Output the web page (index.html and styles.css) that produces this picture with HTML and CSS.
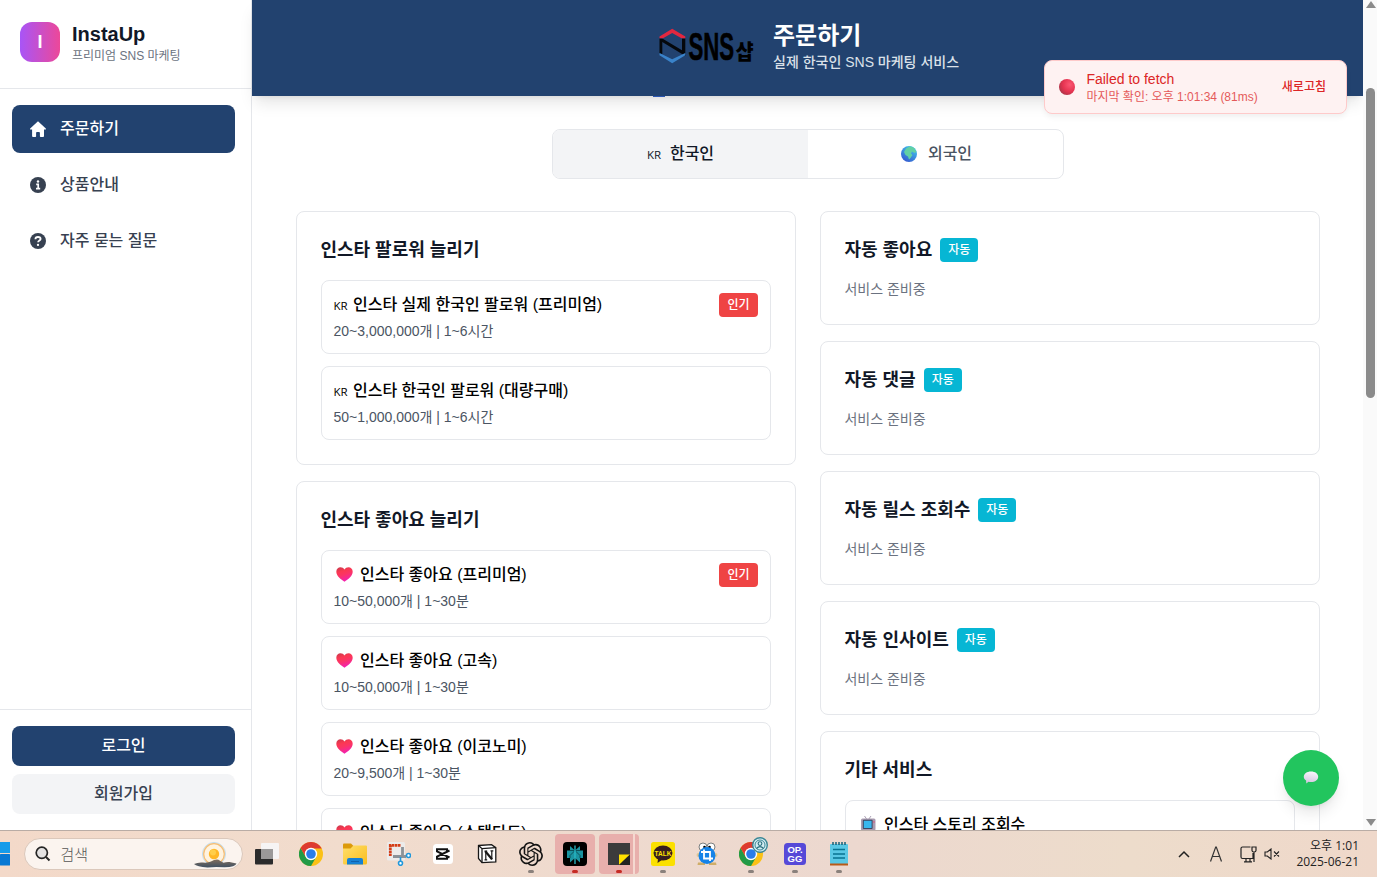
FILE: index.html
```html
<!DOCTYPE html>
<html lang="ko">
<head>
<meta charset="utf-8">
<title>InstaUp</title>
<link rel="stylesheet" href="styles.css">
</head>
<body>
<svg class="defs" width="0" height="0" aria-hidden="true">
  <defs>
    <linearGradient id="heartFill" x1="0" y1="0" x2=".35" y2="1"><stop offset="0" stop-color="#c33a4c"/><stop offset=".35" stop-color="#fb3852"/><stop offset=".6" stop-color="#fb3466"/><stop offset="1" stop-color="#f321ae"/></linearGradient>
    <linearGradient id="folderFill" x1="0" y1="0" x2="1" y2="1"><stop offset="0" stop-color="#ffdf6b"/><stop offset="1" stop-color="#f9bd1d"/></linearGradient>
    <symbol id="heart" viewBox="0 0 17 15"><path d="M8.500 14.800C5 12.300.3 9 .3 4.700.3 2 2.300.3 4.500.3c1.700 0 3 .8 4 2.200 1-1.400 2.300-2.200 4-2.200 2.200 0 4.200 1.700 4.200 4.400 0 4.300-4.700 7.600-8.200 10.100z" fill="url(#heartFill)"/></symbol>
    <symbol id="chrome" viewBox="0 0 24 24"><circle cx="12" cy="12" r="12" fill="#fbc116"/><path d="M1.600 6A12 12 0 0 0 12 24l5.200-9L12 12 6.800 15z" fill="#229a47"/><path d="M1.600 6A12 12 0 0 1 22.400 6l.3.600H12L6.800 15z" fill="#dd3b30"/><circle cx="12" cy="12" r="6.200" fill="#fff"/><circle cx="12" cy="12" r="4.800" fill="#2a7de9"/></symbol>
  </defs>
</svg>

<div class="browser">
  <aside class="sidebar">
    <div class="brand">
      <div class="brand-mark">I</div>
      <div><h1 class="brand-name">InstaUp</h1><p class="brand-sub">프리미엄 SNS 마케팅</p></div>
    </div>
    <nav class="nav">
      <a class="nav-item active"><svg width="16" height="16" viewBox="0 0 16 16"><path d="M8 0.300 15.800 7.600c.4.500.1 1-.5 1H14v6.500c0 .5-.3.900-.9.900h-2.500c-.4 0-.7-.3-.7-.7V11.800c0-.6-.4-.9-.9-.9H7c-.6 0-.9.3-.9.9v3.500c0 .4-.3.700-.7.700H3c-.6 0-.9-.4-.9-.9V8.600H.7c-.6 0-.9-.5-.5-1z" fill="#fff"/></svg><span>주문하기</span></a>
      <a class="nav-item"><svg width="16" height="16" viewBox="0 0 16 16"><circle cx="8" cy="8" r="8" fill="#374151"/><circle cx="8" cy="4.500" r="1.200" fill="#fff"/><path d="M6.200 7.400h2v4M6 11.700h4.200" stroke="#fff" stroke-width="1.700" fill="none"/></svg><span>상품안내</span></a>
      <a class="nav-item"><svg width="16" height="16" viewBox="0 0 16 16"><circle cx="8" cy="8" r="8" fill="#374151"/><path d="M5.400 6.200C5.400 4.500 6.600 4 8 4c1.600 0 2.600.8 2.600 2 0 1.600-2.500 1.500-2.500 3.300" stroke="#fff" stroke-width="1.800" fill="none"/><circle cx="8" cy="11.900" r="1.150" fill="#fff"/></svg><span>자주 묻는 질문</span></a>
    </nav>
    <div class="auth">
      <button class="btn btn-primary">로그인</button>
      <button class="btn">회원가입</button>
    </div>
  </aside>

  <main class="main">
    <header class="hero">
      <svg class="logo" width="100" height="40" viewBox="0 0 100 40">
        <path d="M1.500 11.500V26.500L4.300 27V15L27.300 29V11.500H24V23.300L4.300 11.500z" fill="#05080c"/>
        <path d="M1.500 11.300V9.500L14.200 1.700 27.300 9.500V11.300H23.500L14.200 6 5 11.300z" fill="#e3273f"/>
        <path d="M1.500 26V28.200L14.200 36.200 27.300 28.200V26L14.200 32.300z" fill="#3a83ca"/>
        <g transform="translate(30.500 32.500) scale(.585 1.030)"><text class="logo-latin">SNS</text></g>
        <g transform="translate(77.500 31.500) scale(1.040 1.100)"><text class="logo-hangul">샵</text></g>
      </svg>
      <div><h2 class="hero-title">주문하기</h2><p class="hero-sub">실제 한국인 SNS 마케팅 서비스</p></div>
      <i class="hero-dot"></i>
    </header>

    <div class="content">
      <div class="tabs">
        <div class="tab on"><span class="kr">KR</span><span>한국인</span></div>
        <div class="tab"><svg class="globe" width="16" height="16" viewBox="0 0 16 16"><defs><linearGradient id="sea" x1=".8" y1="0" x2=".2" y2="1"><stop offset="0" stop-color="#43c9ed"/><stop offset="1" stop-color="#3456cf"/></linearGradient></defs><circle cx="8" cy="8" r="8" fill="url(#sea)"/><path d="M3 6 5 2.500 9 .3l4 1.500 2.300 4-1.800 1.200L11 5.500l-1 2 1.500 1.500L9.500 12 8 13.500 7 10.500 4.500 9z" fill="#62d0a4"/></svg><span>외국인</span></div>
      </div>

      <div class="columns">
        <div class="col">
          <section class="card">
            <h3>인스타 팔로워 늘리기</h3>
            <div class="items">
              <div class="item"><div><p class="title"><span class="kr">KR</span> 인스타 실제 한국인 팔로워 (프리미엄)</p><p class="meta">20~3,000,000개 | 1~6시간</p></div><span class="pill hot">인기</span></div>
              <div class="item"><div><p class="title"><span class="kr">KR</span> 인스타 한국인 팔로워 (대량구매)</p><p class="meta">50~1,000,000개 | 1~6시간</p></div></div>
            </div>
          </section>
          <section class="card">
            <h3>인스타 좋아요 늘리기</h3>
            <div class="items">
              <div class="item"><div><p class="title"><svg class="heart"><use href="#heart"/></svg> 인스타 좋아요 (프리미엄)</p><p class="meta">10~50,000개 | 1~30분</p></div><span class="pill hot">인기</span></div>
              <div class="item"><div><p class="title"><svg class="heart"><use href="#heart"/></svg> 인스타 좋아요 (고속)</p><p class="meta">10~50,000개 | 1~30분</p></div></div>
              <div class="item"><div><p class="title"><svg class="heart"><use href="#heart"/></svg> 인스타 좋아요 (이코노미)</p><p class="meta">20~9,500개 | 1~30분</p></div></div>
              <div class="item"><div><p class="title"><svg class="heart"><use href="#heart"/></svg> 인스타 좋아요 (스탠다드)</p></div></div>
            </div>
          </section>
        </div>
        <div class="col">
          <section class="card"><h3>자동 좋아요<span class="pill auto">자동</span></h3><p class="pending">서비스 준비중</p></section>
          <section class="card"><h3>자동 댓글<span class="pill auto">자동</span></h3><p class="pending">서비스 준비중</p></section>
          <section class="card"><h3>자동 릴스 조회수<span class="pill auto">자동</span></h3><p class="pending">서비스 준비중</p></section>
          <section class="card"><h3>자동 인사이트<span class="pill auto">자동</span></h3><p class="pending">서비스 준비중</p></section>
          <section class="card">
            <h3>기타 서비스</h3>
            <div class="items">
              <div class="item"><div><p class="title"><svg class="tv" viewBox="0 0 16 16"><path d="M4.500 0 7 3.500M11 0 8.500 3.500" stroke="#aaa0b5" fill="none"/><rect x="1" y="2.500" width="14.500" height="12" rx="1.500" fill="#a99bb0"/><rect x="2.800" y="3.800" width="9.800" height="9.200" rx="1" fill="#3d4762"/><rect x="3.800" y="4.800" width="7.800" height="7.200" fill="#38b6ee"/><circle cx="14" cy="6" r=".8" fill="#e04f7c"/></svg> 인스타 스토리 조회수</p></div></div>
            </div>
          </section>
        </div>
      </div>
    </div>
  </main>

  <div class="scrollbar"><i class="arrow up"></i><i class="thumb"></i><i class="arrow down"></i></div>

  <div class="toast">
    <svg width="16" height="16" viewBox="0 0 16 16"><defs><radialGradient id="ball" cx=".68" cy=".35" r=".75"><stop offset="0" stop-color="#fb5672"/><stop offset=".6" stop-color="#e53350"/><stop offset="1" stop-color="#a93548"/></radialGradient></defs><circle cx="8" cy="8" r="8" fill="url(#ball)"/></svg>
    <div class="toast-body"><p class="toast-title">Failed to fetch</p><p class="toast-sub">마지막 확인: 오후 1:01:34 (81ms)</p></div>
    <span class="toast-action">새로고침</span>
  </div>

  <div class="fab"><svg width="16" height="14" viewBox="0 0 16 14"><defs><linearGradient id="bub" x1=".6" y1="0" x2=".4" y2="1"><stop offset="0" stop-color="#f9f5fb"/><stop offset="1" stop-color="#d3c5df"/></linearGradient></defs><path d="M8 .5c4.200 0 7.200 2.200 7.200 5.300S12.200 11.100 8 11.100q-1.500 0-2.500-.3L3.300 12.500l-.2-3C1.700 8.700.8 7.400.8 5.800.8 2.700 3.800.5 8 .5z" fill="url(#bub)"/></svg></div>
</div>

<footer class="taskbar">
  <svg class="win" width="10" height="24" viewBox="0 0 10 24"><rect width="10" height="11" fill="#169bea"/><rect y="12" width="10" height="11.500" rx=".5" fill="#0878d3"/></svg>
  <div class="search">
    <svg width="16" height="16" viewBox="0 0 16 16"><circle cx="6.800" cy="6.800" r="5.600" fill="#e4e2e2" stroke="#252525" stroke-width="1.700"/><path d="M11 11 14.500 14.500" stroke="#252525" stroke-width="2"/></svg>
    <span>검색</span>
    <svg class="weather" width="44" height="28" viewBox="0 0 44 28"><defs><linearGradient id="cloud" x1="0" y1="0" x2="0" y2="1"><stop offset="0" stop-color="#806d5c"/><stop offset="1" stop-color="#3f5164"/></linearGradient></defs><circle cx="21" cy="14" r="11.500" fill="#fff3df" stroke="#bddcf1"/><circle cx="21" cy="14" r="10.300" fill="none" stroke="#f5bd75" stroke-width="1.200"/><circle cx="21" cy="14" r="5.200" fill="#ffb726"/><circle cx="20" cy="12.500" r="3" fill="#ffce49"/><path d="M1 24q4-2 9-1.500 5 .5 8-1 4-2.500 7.500-1.800 2 1.400 5 3 3-1 6-.7l7 1.500q-1 3.500-12 3.800-9-.8-17 .1Q4 27 1 24z" fill="url(#cloud)"/></svg>
  </div>
  <div class="apps">
    <div class="app"><svg viewBox="0 0 24 24"><rect x="0" y="7" width="18" height="15.500" rx="1" fill="#2b2b2b"/><rect x="6" y="1" width="18" height="16" rx="1" fill="#f6f4f4"/><rect x="6" y="7" width="12" height="10" fill="#9b9999"/></svg></div>
    <div class="app"><svg viewBox="0 0 24 24"><use href="#chrome"/></svg></div>
    <div class="app"><svg viewBox="0 0 24 24"><path d="M0 2.500Q0 1.500 1 1.500H8L10.500 4 8 7H0z" fill="#dc9a0b"/><path d="M0 6.500H7.500L10.500 3.500H23Q24 3.500 24 4.500V21Q24 22.500 22.500 22.500H1.500Q0 22.500 0 21z" fill="url(#folderFill)"/><path d="M4 22.500V18Q4 16 6 16H18Q20 16 20 18V22.500z" fill="#1681d4"/><path d="M8 19.500h8" stroke="#0f62ad"/></svg></div>
    <div class="app"><svg viewBox="0 0 24 24"><rect x="0" y="0" width="18" height="18.500" rx="1.500" fill="#ecebea"/><path d="M13.500 3.300H3.300V14" fill="none" stroke="#d43d16" stroke-width="2.800" stroke-dasharray="2.600 .5"/><path d="M15.500 5V15.500M19 14.500H6" fill="none" stroke="#8b9298" stroke-width="2.800"/><path d="M13.500 15v4" stroke="#2098dc" stroke-width="1.600"/><circle cx="21.500" cy="13.500" r="2" fill="#fff" stroke="#2098dc" stroke-width="1.600"/><circle cx="13.500" cy="21.300" r="2" fill="#fff" stroke="#2098dc" stroke-width="1.600"/></svg></div>
    <div class="app"><svg viewBox="0 0 24 24"><rect x="2" y="2" width="20" height="20" rx="3.500" fill="#fff"/><path d="M16 9.300V7.300H6V9.300L18.500 15.500M16 14.700V16.700H6V14.700L18.500 8.500" fill="none" stroke="#111" stroke-width="2"/></svg></div>
    <div class="app"><svg viewBox="0 0 24 24"><path d="M3.500 3.500 16.500 2.700 20.800 5.700V19.800L7 20.700 3.500 16.500z" fill="#fff" stroke="#171717" stroke-width="1.300"/><path d="M3.500 3.500 7 6.700 20.800 5.700M7 6.700V20.700" fill="none" stroke="#171717" stroke-width="1.300"/><path d="M10.300 9.300 17 17.300" stroke="#171717" stroke-width="2.200"/><path d="M10.800 17.700V9.500M16.800 17.500V9M9.500 9.200h2.700M15.500 8.800h2.800M9.500 17.800H12.200" fill="none" stroke="#171717" stroke-width="1.200"/></svg></div>
    <div class="app running"><svg viewBox="0 0 24 24"><path fill="#141414" d="M22.280 9.820a5.980 5.980 0 0 0-.52-4.910 6.050 6.050 0 0 0-6.510-2.900A6.070 6.070 0 0 0 4.980 4.180a5.980 5.980 0 0 0-4 2.900 6.050 6.050 0 0 0 .74 7.100 5.980 5.980 0 0 0 .51 4.910 6.050 6.050 0 0 0 6.510 2.900A5.980 5.980 0 0 0 13.260 24a6.060 6.060 0 0 0 5.770-4.210 5.990 5.990 0 0 0 4-2.900 6.060 6.060 0 0 0-.75-7.070zm-9.020 12.610a4.480 4.480 0 0 1-2.880-1.040l.14-.08 4.780-2.760a.79.79 0 0 0 .39-.68v-6.740l2.020 1.170.04.05v5.580a4.500 4.500 0 0 1-4.490 4.500zm-9.660-4.130a4.470 4.470 0 0 1-.54-3.010l.14.090 4.780 2.760a.77.77 0 0 0 .78 0l5.840-3.370v2.330l-.03.060-4.830 2.790a4.500 4.500 0 0 1-6.140-1.650zM2.340 7.900a4.490 4.490 0 0 1 2.370-1.970v5.680a.77.77 0 0 0 .39.680l5.810 3.350-2.020 1.170h-.07l-4.830-2.790A4.500 4.500 0 0 1 2.340 7.870zm16.600 3.860-5.840-3.390L15.120 7.200h.07l4.830 2.790a4.490 4.490 0 0 1-.68 8.100v-5.680a.79.790 0 0 0-.4-.65zm2.010-3.020-.14-.09-4.770-2.780a.78.780 0 0 0-.79 0L9.410 9.230V6.900l.03-.06 4.830-2.790a4.500 4.500 0 0 1 6.680 4.660zM8.310 12.860l-2.020-1.160-.04-.06V6.070a4.500 4.500 0 0 1 7.380-3.450l-.14.08L8.700 5.460a.79.790 0 0 0-.39.680zm1.090-2.360L12 9l2.610 1.500v3L12 15l-2.600-1.500z"/></svg></div>
    <div class="app running alert"><svg viewBox="0 0 24 24"><rect width="24" height="24" rx="4" fill="#000"/><path d="M4 8.500H7V4L12 8.500 17 4V8.500H20V16H17V20.500L12 16 7 20.500V16H4z" fill="#1b93a1"/><path d="M7 16V13.500L12 8.500 17 13.500V16M7 8.500H17" fill="none" stroke="#0b4953" stroke-width=".9"/><path d="M12 3.500V22" stroke="#28bac8" stroke-width="1.300"/></svg></div>
    <div class="app running alert stacked"><svg viewBox="0 0 24 24"><path d="M1 1H23V23H1z" fill="#3b3b3b"/><path d="M12 12.500H23L12 23z" fill="#ffe100"/><path d="M23 12.500V23H12z" fill="#222"/></svg></div>
    <div class="app running"><svg viewBox="0 0 24 24"><rect width="24" height="24" rx="2.500" fill="#fbe000"/><ellipse cx="12" cy="11" rx="9.500" ry="7.500" fill="#381e1e"/><path d="M7 16.500 6.500 21l5-3.500z" fill="#381e1e"/><text class="talk" x="12" y="13.500" text-anchor="middle">TALK</text></svg></div>
    <div class="app"><svg viewBox="0 0 24 24"><circle cx="8" cy="5" r="4" fill="#fff" stroke="#7b7f80"/><circle cx="16" cy="5" r="4" fill="#fff" stroke="#7b7f80"/><circle cx="9.500" cy="5" r="1.300"/><circle cx="14.500" cy="5" r="1.300"/><path d="M3 20.500h7v2.500H2.500zM14 20.500h7l.5 2.500H14z" fill="#cfad68"/><circle cx="3.500" cy="13" r="2" fill="#e0c793"/><circle cx="20.500" cy="13" r="2" fill="#e0c793"/><circle cx="12" cy="13.500" r="8.500" fill="#1583e8"/><path d="M9 7.500V16.500H18M6 10H15V19" fill="none" stroke="#fff" stroke-width="1.800"/></svg></div>
    <div class="app running"><svg viewBox="0 0 24 24"><use href="#chrome"/></svg><svg class="profile" viewBox="0 0 16 16"><circle cx="8" cy="8" r="7.300" fill="#d4edf2" stroke="#3b8796" stroke-width="1.400"/><circle cx="8" cy="8" r="5" fill="none" stroke="#3b8796"/><circle cx="8" cy="6.600" r="1.900" fill="none" stroke="#266d7c" stroke-width="1.100"/><path d="M4.500 11.500Q8 7.800 11.500 11.500" fill="none" stroke="#266d7c" stroke-width="1.200"/></svg></div>
    <div class="app running"><svg viewBox="0 0 24 24"><rect x="1" y="1" width="22" height="22" rx="3.500" fill="#5649d8"/><text class="opgg" x="12" y="11.300" text-anchor="middle">OP.</text><text class="opgg" x="12" y="20" text-anchor="middle">GG</text></svg></div>
    <div class="app running"><svg viewBox="0 0 24 24"><rect x="3" y="2" width="18" height="20" rx="1" fill="#5ac8e5"/><path d="M3 21.500h18v2H3z" fill="#b95a18"/><path d="M6 0v3M9 0v3M12 0v3M15 0v3M18 0v3" stroke="#176078" stroke-width="1.500"/><path d="M6 7.500h12M6 12h12M6 16h12" stroke="#087391" stroke-width="1.700"/></svg></div>
  </div>
  <div class="tray">
    <svg width="12" height="8" viewBox="0 0 12 8"><path d="M1 7 6 2l5 5" fill="none" stroke="#222" stroke-width="1.500"/></svg>
    <svg width="14" height="18" viewBox="0 0 14 18"><path d="M1.500 16.500 6.700 2h.6L12.500 16.500M3.400 11.500h7.200" fill="none" stroke="#333" stroke-width="1.200"/></svg>
    <svg width="17" height="17" viewBox="0 0 17 17"><path d="M10.500 1H2.500Q1 1 1 2.500V11Q1 12.500 2.500 12.500H13V7M4 15.800h8M6 13v2.500M10 13v2.500M12 1h4v3.500q0 1.500-2 1.500t-2-1.500zM14 6v10" fill="none" stroke="#222" stroke-width="1.200"/></svg>
    <svg width="16" height="12" viewBox="0 0 16 12"><path d="M1 4h2.300L7 1v10L3.300 8H1zM10 3.500l5 5M15 3.500l-5 5" fill="none" stroke="#222" stroke-width="1.100"/></svg>
    <div class="clock"><span>오후 1:01</span><span>2025-06-21</span></div>
  </div>
</footer>
</body>
</html>
```

FILE: styles.css
```css
* { box-sizing: border-box; margin: 0; padding: 0; }
body {
  width: 1377px;
  height: 877px;
  overflow: hidden;
  font-family: "Liberation Sans", "Noto Sans CJK KR", sans-serif;
  font-size: 16px;
  line-height: 24px;
  color: #000;
  background: #fff;
}
svg { display: block; flex: none; }
.defs { position: absolute; }

.browser { position: relative; display: flex; height: 830px; overflow: hidden; }

/* Sidebar */
.sidebar { width: 252px; flex: none; display: flex; flex-direction: column; border-right: 1px solid #e5e7eb; }
.brand { height: 89px; padding: 20px; display: flex; gap: 12px; border-bottom: 1px solid #e5e7eb; }
.brand-mark {
  width: 40px; height: 40px; margin-top: 2px; border-radius: 12px;
  display: grid; place-items: center;
  color: #fff; font-weight: 700; font-size: 18px;
  background: linear-gradient(90deg, #a855f7, #ec4899);
}
.brand-name { font-size: 20px; line-height: 28px; color: #111827; }
.brand-sub { font-size: 12px; line-height: 16px; color: #6b7280; }
.nav { flex: 1; padding: 16px 16px 0 12px; display: flex; flex-direction: column; gap: 8px; }
.nav-item { height: 48px; padding: 0 18px; display: flex; align-items: center; gap: 14px; border-radius: 8px; color: #374151; font-weight: 500; }
.nav-item.active { background: #22426f; color: #fff; }
.auth { height: 121px; padding: 16px 16px 16px 12px; border-top: 1px solid #e5e7eb; display: flex; flex-direction: column; gap: 8px; }
.btn { height: 40px; border: 0; border-radius: 8px; background: #f3f4f6; color: #374151; font: 500 16px/24px "Liberation Sans", "Noto Sans CJK KR", sans-serif; }
.btn-primary { background: #22426f; color: #fff; }

/* Main area */
.main { width: 1111px; flex: none; }
.hero {
  position: relative; height: 96px; padding: 20px 0 0 405px;
  display: flex; gap: 16px; background: #22426f; color: #fff;
  box-shadow: 0 10px 15px -3px rgba(0,0,0,.1), 0 4px 6px -4px rgba(0,0,0,.1);
}
.hero-title { font-size: 24px; line-height: 32px; }
.hero-sub { font-size: 14px; line-height: 20px; font-weight: 500; color: #dbe1e9; }
.hero-dot { position: absolute; left: 401px; bottom: -1px; width: 12px; height: 1px; background: #2b57b4; }
.logo { margin-top: 7px; margin-left: 1px; margin-right: -1px; overflow: visible; }
.logo-latin { font: 700 38px "Liberation Sans", sans-serif; stroke: #000; stroke-width: .6px; }
.logo-hangul { font: 900 19px "Noto Sans CJK KR", sans-serif; }

.content { padding: 33px 43px 0 44px; }
.tabs { width: 512px; height: 50px; margin: 0 auto 32px; display: grid; grid-template-columns: 255px 255px; border: 1px solid #e5e7eb; border-radius: 8px; overflow: hidden; }
.tab { display: flex; align-items: center; justify-content: center; gap: 8px; font-weight: 500; color: #4b5563; }
.tab.on { background: #f3f4f6; color: #111827; }
.tab:last-child { padding-left: 2px; }
.globe { margin-right: 3px; margin-top: -1px; }
.kr { font: 500 11.500px/12px "Open Sans", "Noto Sans", sans-serif; display: inline-block; width: 15px; }
.tab .kr { margin-top: 2px; }

.columns { display: grid; grid-template-columns: 500px 500px; gap: 24px; }
.col { display: flex; flex-direction: column; gap: 16px; }
.card { padding: 24px; border: 1px solid #e5e7eb; border-radius: 8px; background: #fff; }
.card h3 { height: 28px; display: flex; align-items: center; gap: 8px; margin: 0 0 16px -.6px; font-size: 18px; line-height: 28px; color: #111827; }
.items { display: flex; flex-direction: column; gap: 12px; }
.item { height: 74px; padding: 12px; display: flex; justify-content: space-between; align-items: flex-start; border: 1px solid #e5e7eb; border-radius: 8px; }
.title { height: 24px; margin: 0 0 4px -.5px; font-weight: 500; white-space: nowrap; }
.meta { margin-left: -.5px; font-size: 14px; line-height: 20px; color: #4b5563; }
.pending { margin: -1px 0 1px -.6px; font-size: 14px; line-height: 20px; color: #6b7280; }
.pill { height: 24px; padding: 4px 8px; border-radius: 4px; color: #fff; font-size: 12px; line-height: 16px; font-weight: 500; }
.hot { padding: 4px 8.500px; background: #ef4444; }
.auto { background: #06b6d4; }
.heart { display: inline-block; width: 17px; height: 15px; margin: 0 3px 0 2px; vertical-align: -2px; }
.tv { display: inline-block; width: 16px; height: 16px; margin: 0 4px 0 2px; vertical-align: -2px; }

/* Page scrollbar */
.scrollbar { position: relative; width: 14px; background: #fafafa; }
.thumb { position: absolute; left: 3px; top: 88px; width: 9px; height: 310px; border-radius: 5px; background: #8b8b8b; }
.arrow { position: absolute; left: 3px; border: 5px solid transparent; }
.up { top: -4px; border-bottom: 7px solid #8b8b8b; }
.down { bottom: -1px; border-top: 7px solid #8b8b8b; }

/* Floating elements */
.toast {
  position: absolute; left: 1044px; top: 60px; width: 303px; height: 54px; padding: 0 20px 0 14.400px;
  display: flex; align-items: center;
  background: #fef2f2; border: 1px solid #fecaca; border-radius: 8px;
  box-shadow: 0 4px 6px -1px rgba(0,0,0,.06);
}
.toast svg { margin-top: -1px; }
.toast-body { flex: 1; margin: -1px 0 0 11px; color: #dc2626; }
.toast-title { font-size: 14px; line-height: 20px; }
.toast-sub { font-size: 12px; line-height: 16px; opacity: .75; }
.toast-action { font-size: 12px; font-weight: 500; color: #dc2626; line-height: 16px; }
.fab {
  position: absolute; left: 1283px; top: 750px; width: 56px; height: 56px; border-radius: 50%;
  display: grid; place-items: center; background: #22c55e;
  box-shadow: 0 10px 15px -3px rgba(0,0,0,.1), 0 4px 6px -4px rgba(0,0,0,.1);
}

/* Desktop taskbar */
.taskbar {
  height: 47px; display: flex; align-items: center; border-top: 1px solid #b9aca5;
  background: linear-gradient(90deg, #f3d9c9 0, #f1dccd 25%, #ecd8cf 62%, #eddccb 82%, #efd8ca 100%);
}
.search { width: 219px; height: 32px; margin-left: 13.500px; padding-left: 10px; display: flex; align-items: center; gap: 10px; border: 1px solid #dbc8bb; border-radius: 16px; background: #fbf4ef; color: #555; }
.search span { font: 300 15px/24px "Noto Sans CJK KR", sans-serif; margin-top: -1px; }
.weather { margin-left: auto; margin-right: 5px; }
.apps { display: flex; margin-left: 2.500px; }
.app { position: relative; width: 44px; height: 46px; display: grid; place-items: center; }
.app > svg { position: relative; width: 24px; height: 24px; }
.app .profile { position: absolute; left: 23px; top: 6px; width: 16px; height: 16px; }
.running::after { content: ""; position: absolute; bottom: 4px; left: 19px; width: 6px; height: 3px; border-radius: 2px; background: #8a817c; }
.alert::before { content: ""; position: absolute; left: 2px; top: 3px; width: 40px; height: 40px; border-radius: 4px; background: #e8afac; }
.alert::after { background: #c62b24; }
.stacked::before { background: linear-gradient(90deg, #e8afac 0 34px, #f5d8d0 34px 36px, #e8afac 36px); }
.talk { font: 700 6.500px "Liberation Sans", sans-serif; fill: #fbe000; }
.opgg { font: 700 9.500px "Liberation Sans", sans-serif; fill: #fff; }
.tray { margin-left: auto; padding-right: 18px; display: flex; align-items: center; }
.tray svg:nth-child(2) { margin-left: 19px; }
.tray svg:nth-child(3) { margin-left: 17px; }
.tray svg:nth-child(4) { margin-left: 7px; }
.clock { width: 63px; margin-left: 16px; display: flex; flex-direction: column; align-items: flex-end; white-space: nowrap; font: 12px/16px "Open Sans", "Noto Sans CJK KR", sans-serif; color: #222; }
```
